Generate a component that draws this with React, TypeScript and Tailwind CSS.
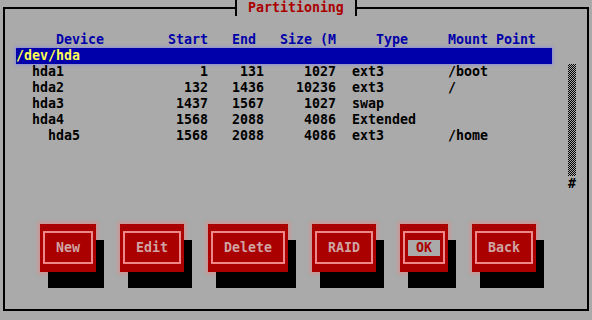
const rows = [
  { dev: 'hda1', start: '1', end: '131', size: '1027', type: 'ext3', mount: '/boot', depth: 1 },
  { dev: 'hda2', start: '132', end: '1436', size: '10236', type: 'ext3', mount: '/', depth: 1 },
  { dev: 'hda3', start: '1437', end: '1567', size: '1027', type: 'swap', mount: '', depth: 1 },
  { dev: 'hda4', start: '1568', end: '2088', size: '4086', type: 'Extended', mount: '', depth: 1 },
  { dev: 'hda5', start: '1568', end: '2088', size: '4086', type: 'ext3', mount: '/home', depth: 2 },
];

const buttons = [
  { label: 'New', w: 'w-14' },
  { label: 'Edit', w: 'w-16' },
  { label: 'Delete', w: 'w-20' },
  { label: 'RAID', w: 'w-16' },
  { label: 'OK', w: 'w-12', focused: true },
  { label: 'Back', w: 'w-16' },
];

const grid = 'grid grid-cols-[144px_48px_56px_72px_112px_104px] h-4';

export default function App() {
  return (
    <div className="w-[592px] h-[320px] overflow-hidden bg-[#aaaaaa] pt-[7px] pl-[3px] font-['DejaVu_Sans_Mono','Liberation_Mono',monospace] text-[13.28px] font-bold leading-4 whitespace-pre">
      <div className="relative w-[586px] h-[304px] border-2 border-black">
        {/* window title */}
        <div className="absolute -top-[9px] left-[230px] h-4 w-[122px] bg-[#aaaaaa] border-x-2 border-black pl-[11px] text-[#aa0000]">
          Partitioning
        </div>

        <div className="ml-[11px] mt-[23px] flex">
          <div className="w-[536px]">
            {/* column headings */}
            <div className={`${grid} text-[#0000aa]`}>
              <span className="pl-10">Device</span>
              <span className="text-right">Start</span>
              <span className="text-right pr-2">End</span>
              <span className="text-right">Size (M</span>
              <span className="pl-10">Type</span>
              <span>Mount Point</span>
            </div>

            {/* listbox */}
            <div className="h-[144px]">
              <div className="h-4 bg-[#0000aa] text-[#ffff55] shadow-[0_0_3px_1px_rgba(120,120,255,0.6)]">/dev/hda</div>
              {rows.map((r) => (
                <div key={r.dev} className={`${grid} text-black`}>
                  <span className={r.depth === 2 ? 'pl-8' : 'pl-4'}>{r.dev}</span>
                  <span className="text-right">{r.start}</span>
                  <span className="text-right">{r.end}</span>
                  <span className="text-right">{r.size}</span>
                  <span className="pl-4">{r.type}</span>
                  <span>{r.mount}</span>
                </div>
              ))}
            </div>
          </div>

          {/* scrollbar */}
          <div className="ml-4 mt-8 w-2">
            <div className="h-[112px] [background-image:repeating-conic-gradient(#000_0_25%,#aaaaaa_0_50%)] [background-size:2px_2px]" />
            <div className="h-4 text-black">#</div>
          </div>
        </div>

        {/* buttons */}
        <div className="ml-[35px] mt-8 flex gap-6">
          {buttons.map((b) => (
            <div
              key={b.label}
              className={`${b.w} h-12 bg-[#aa0000] px-[3px] pt-[7px] pb-2 shadow-[8px_16px_0_0_#000,0_0_4px_2px_rgba(255,120,120,0.45)]`}
            >
              <div className="h-full border-2 border-[#ee8888] flex items-center justify-center">
                {b.focused ? (
                  <span className="bg-[#aaaaaa] px-2 text-[#aa0000]">{b.label}</span>
                ) : (
                  <span className="text-[#d0a4a4]">{b.label}</span>
                )}
              </div>
            </div>
          ))}
        </div>
      </div>
    </div>
  );
}
